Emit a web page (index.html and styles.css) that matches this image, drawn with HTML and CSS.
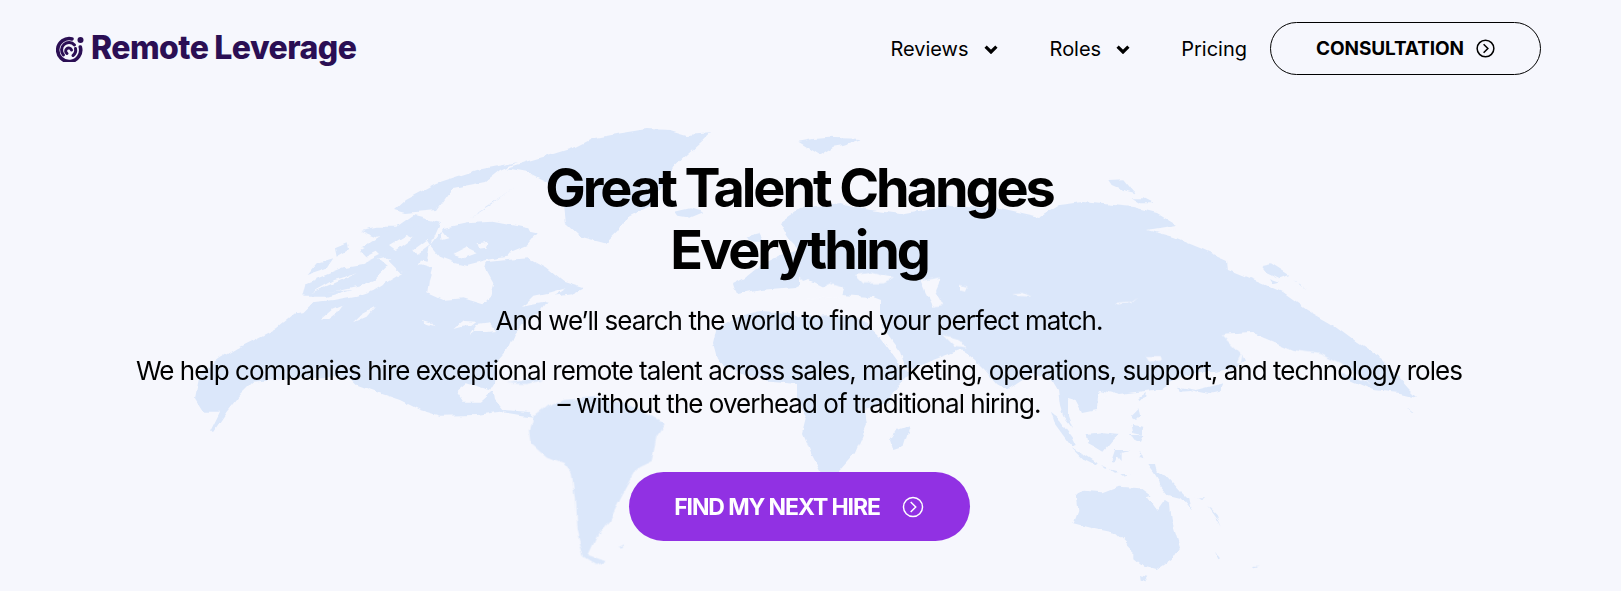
FILE: index.html
```html
<!DOCTYPE html>
<html lang="en">
<head>
<meta charset="utf-8">
<title>Remote Leverage</title>
<link rel="stylesheet" href="styles.css">
</head>
<body>
<svg class="map" viewBox="0 0 1621 591" aria-hidden="true">
  <defs>
    <filter id="rough" filterUnits="userSpaceOnUse" x="0" y="0" width="1621" height="591">
      <feTurbulence type="fractalNoise" baseFrequency="0.07" numOctaves="3" seed="4" result="noise"/>
      <feDisplacementMap in="SourceGraphic" in2="noise" scale="6" xChannelSelector="R" yChannelSelector="G"/>
    </filter>
  </defs>
  <g class="land" filter="url(#rough)">
    <!-- North America, drawn in crop coordinates -->
    <g transform="translate(200 225) scale(.3333)">
      <path d="M-15,520 L0,445 L60,400 L110,370 L180,335 L230,310 L285,265 L310,262 L340,232 L400,225 L470,212 L520,195 L560,170 L610,140 L660,118 L700,130 L690,165 L685,205 L730,225 L790,220 L850,238 L870,215 L880,175 L855,130 L860,112 L920,105 L985,100 L1040,130 L1090,170 L1150,190 L1120,205 L1060,212 L1000,225 L965,245 L1040,232 L1020,260 L975,290 L945,330 L925,375 L890,415 L885,470 L870,495 L800,475 L770,500 L790,530 L840,530 L880,495 L885,525 L910,555 L985,560 L1000,575 L960,570 L900,560 L830,570 L720,572 L660,555 L600,525 L540,505 L470,480 L450,460 L300,460 L160,470 L120,510 L80,560 L40,620 L30,620 L60,560 L10,560 L-15,520 Z"/>
      <path d="M320,150 L350,115 L400,100 L380,130 Z"/>
      <path d="M310,215 L320,175 L380,150 L430,130 L490,120 L530,100 L560,125 L520,165 L450,195 L380,215 Z"/>
      <path d="M405,70 L440,55 L445,75 L410,95 Z"/>
      <path d="M480,80 L530,50 L590,40 L620,60 L570,95 L510,110 Z"/>
      <path d="M560,105 L610,85 L660,105 L650,130 L600,145 Z"/>
      <path d="M540,40 L640,-30 L720,-10 L690,60 L680,110 L620,100 L560,100 Z"/>
      <path d="M690,60 L730,10 L800,-5 L880,-10 L985,10 L1000,40 L950,60 L920,95 L860,105 L800,120 L760,110 L720,95 Z"/>
      <path d="M480,15 L530,5 L600,5 L640,-20 L660,0 L600,25 L530,35 Z"/>
    </g>
    <!-- Arctic islands and Greenland -->
    <path d="M518,162 L477,170 L437,183 L405,200 L394,210 L405,213 L437,210 L453,188 L485,182 L500,170 Z"/>
    <path d="M470,218 L500,198 L516,186 L490,206 Z"/>
    <path d="M362,248 L385,233 L413,230 L405,245 L375,253 Z"/>
    <g transform="translate(470 125) scale(.3333)">
      <path d="M720,25 L650,30 L600,15 L530,12 L450,25 L370,40 L320,65 L240,90 L170,110 L110,130 L170,140 L230,170 L280,250 L285,295 L330,335 L405,355 L440,320 L470,275 L540,240 L580,180 L610,130 L640,100 L700,45 Z"/>
      <path d="M615,260 L660,250 L700,262 L660,278 L625,272 Z"/>
      <path d="M985,50 L1030,42 L1075,38 L1120,40 L1175,42 L1120,60 L1090,65 L1050,90 L1010,65 Z"/>
      <path d="M830,335 L870,325 L885,350 L840,350 Z"/>
      <path d="M0,300 L60,298 L130,310 L200,325 L170,360 L120,380 L60,370 L20,340 Z"/>
    </g>
    <!-- South America -->
    <g transform="translate(520 300) scale(.3333)">
      <path d="M30,395 L40,350 L80,320 L130,300 L240,290 L340,320 L435,370 L410,410 L395,480 L355,500 L305,590 L270,660 L235,700 L205,765 L260,785 L230,795 L190,770 L170,690 L165,600 L155,520 L130,490 L80,470 L35,430 Z"/>
      <path d="M295,745 L315,735 L310,745 Z"/>
      <path d="M-40,250 L40,235 L70,240 L20,252 Z"/>
    </g>
    <!-- Africa -->
    <path d="M713,343 L716,330 L735,318 L760,311 L790,313 L800,317 L833,315 L860,318 L880,337 L897,360 L900,368 L913,372 L908,377 L897,387 L888,403 L865,410 L867,425 L855,453 L840,470 L833,477 L820,470 L813,457 L803,433 L807,417 L797,400 L797,383 L760,380 L727,367 L717,358 Z"/>
    <g transform="translate(800 240) scale(.3333)">
      <path d="M330,555 L310,620 L280,630 L270,600 L290,570 Z"/>
    </g>
    <!-- Eurasia -->
    <path d="M733,283 L745,277 L760,265 L780,255 L800,250 L790,240 L785,232 L780,222 L800,208 L840,203 L870,210 L900,214 L950,205 L1000,208 L1040,217 L1060,205 L1083,202 L1133,207 L1157,213 L1177,225 L1147,230 L1173,237 L1200,248 L1227,260 L1228,270 L1260,283 L1283,293 L1307,310 L1330,323 L1357,343 L1383,360 L1407,387 L1417,397 L1400,393 L1373,390 L1345,378 L1323,358 L1293,350 L1253,333 L1223,335 L1238,345 L1245,360 L1235,368 L1215,372 L1195,372 L1170,383 L1160,390 L1120,395 L1100,390 L1098,396 L1097,410 L1082,413 L1075,400 L1068,398 L1068,415 L1073,428 L1063,415 L1060,405 L1058,390 L1052,380 L1033,373 L1015,385 L1007,390 L997,384 L985,370 L975,360 L965,352 L960,350 L933,360 L913,368 L906,368 L900,352 L885,332 L880,316 L880,300 L872,297 L840,295 L830,290 L810,280 L795,287 L760,290 L737,295 Z"/>
    <!-- Asia-Pacific and Australia -->
    <g transform="translate(1040 150) scale(.3333)">
      <path d="M205,90 L250,88 L285,130 L255,122 L215,105 Z"/>
      <path d="M275,145 L310,145 L340,160 L300,160 Z"/>
      <path d="M665,345 L690,340 L745,375 L720,385 L680,365 Z"/>
      <path d="M760,390 L805,418 L780,405 Z"/>
      <path d="M690,385 L720,395 L700,400 Z"/>
    </g>
    <g transform="translate(1040 370) scale(.3333)">
      <path d="M415,50 L470,60 L530,45 L550,40 L540,65 L510,72 L450,60 L418,62 Z"/>
      <path d="M295,85 L315,72 L312,85 L298,90 Z"/>
      <path d="M30,125 L60,150 L100,205 L110,225 L95,230 L65,190 L40,155 Z"/>
      <path d="M140,195 L185,190 L235,195 L215,215 L190,245 L165,230 L145,220 Z"/>
      <path d="M95,235 L125,250 L170,280 L165,285 L125,265 Z"/>
      <path d="M180,285 L205,295 L195,296 Z"/>
      <path d="M210,298 L240,305 L225,308 Z"/>
      <path d="M238,315 L270,316 L245,320 Z"/>
      <path d="M215,270 L225,240 L275,240 L245,245 L245,270 L232,255 L225,272 Z"/>
      <path d="M270,140 L295,115 L300,135 L285,150 Z"/>
      <path d="M275,165 L310,170 L305,195 L280,190 Z"/>
      <path d="M270,195 L310,195 L300,215 L285,215 Z"/>
      <path d="M298,262 L305,250 L310,265 Z"/>
      <path d="M322,285 L345,285 L350,305 L380,315 L420,360 L445,385 L452,418 L425,385 L385,375 L365,350 L340,310 Z"/>
      <path d="M110,375 L135,365 L190,370 L240,350 L300,355 L335,380 L320,385 L350,425 L375,390 L390,400 L395,450 L420,530 L395,570 L350,600 L310,590 L280,565 L280,540 L260,520 L230,490 L170,478 L100,460 L115,420 Z"/>
      <path d="M300,615 L325,620 L315,635 L302,632 Z"/>
      <path d="M525,545 L540,565 L535,568 Z"/>
      <path d="M635,590 L660,590 L640,595 Z"/>
      <path d="M455,380 L490,390 L495,385 L470,385 Z"/>
      <path d="M505,410 L530,435 L545,470 L530,445 Z"/>
      <path d="M1100,110 L1125,130 L1115,125 Z"/>
    </g>
  </g>
  <!-- Inland water and bays, cut out of the land -->
  <g class="sea" filter="url(#rough)">
    <g transform="translate(200 225) scale(.3333)">
      <path d="M360,285 L395,255 L425,242 L405,270 L385,285 Z"/>
      <path d="M462,292 L490,265 L525,245 L500,275 Z"/>
      <path d="M668,282 L690,288 L703,303 L680,296 Z"/>
      <path d="M760,312 L790,288 L830,290 L815,302 L785,305 Z"/>
      <path d="M810,330 L830,300 L870,295 L885,315 L860,318 L825,318 Z"/>
      <path d="M970,245 L1000,215 L1050,205 L1100,190 L1060,215 Z"/>
      <path d="M720,10 L745,40 L725,45 Z"/>
      <path d="M830,55 L865,50 L860,65 L835,68 Z"/>
      <path d="M760,90 L800,70 L830,85 L790,100 Z"/>
      <path d="M330,205 L400,175 L470,145 L400,165 Z"/>
      <path d="M380,200 L420,195 L530,170 L520,188 L460,192 Z"/>
      <path d="M470,110 L530,80 L540,90 L490,115 Z"/>
      <path d="M570,60 L620,30 L640,40 L590,75 Z"/>
      <path d="M640,75 L680,45 L690,60 L650,90 Z"/>
    </g>
    <g transform="translate(800 240) scale(.3333)">
      <path d="M165,105 L215,98 L285,115 L250,130 L190,130 Z"/>
      <path d="M365,125 L420,115 L405,150 L430,195 L400,200 L380,160 Z"/>
      <path d="M480,135 L500,140 L495,152 L480,148 Z"/>
      <path d="M640,160 L665,158 L692,170 L660,168 Z"/>
      <path d="M945,192 L990,188 L1012,172 L990,192 L955,196 Z"/>
      <path d="M0,110 L50,150 L90,130 L130,145 L120,180 L60,170 L0,190 Z"/>
      <path d="M430,285 L480,300 L500,325 L465,320 Z"/>
    </g>
    <g transform="translate(1040 150) scale(.3333)">
      <path d="M320,238 L400,240 L410,235 L370,245 Z"/>
      <path d="M320,618 L365,618 L370,632 L330,635 Z"/>
      <path d="M180,725 L205,730 L195,745 L175,740 Z"/>
      <path d="M545,555 L640,550 L760,600 L840,612 L900,640 L1000,705 L940,680 L850,650 L760,640 L660,640 L600,610 Z"/>
      <path d="M590,640 L612,595 L602,640 Z"/>
    </g>
  </g>
</svg>

<header class="site-header">
  <a class="logo" href="#">
    <svg class="logo-mark" viewBox="0 0 29 27" aria-hidden="true">
      <path class="logo-ring" d="M16 3.9 A11.5 11.5 0 1 0 24.3 12"/>
      <path class="logo-arc" d="M7.5 20 A7.2 7.2 0 0 1 18.5 10"/>
      <path class="logo-arc" d="M11 18.5 A3 3 0 1 1 15.5 15"/>
      <path class="logo-arc" d="M19.5 13.5 A7 7 0 0 1 17 20.5"/>
      <circle class="logo-dot" cx="24.5" cy="5" r="3"/>
    </svg>
    <span class="logo-text">Remote Leverage</span>
  </a>
  <nav class="nav">
    <a class="nav-link" href="#">Reviews
      <svg class="caret" viewBox="0 0 14 9" aria-hidden="true"><path d="M1.6 1.6 L7 7 L12.4 1.6"/></svg>
    </a>
    <a class="nav-link" href="#">Roles
      <svg class="caret" viewBox="0 0 14 9" aria-hidden="true"><path d="M1.6 1.6 L7 7 L12.4 1.6"/></svg>
    </a>
    <a class="nav-link" href="#">Pricing</a>
    <a class="consult" href="#">CONSULTATION
      <svg class="circle-arrow" viewBox="0 0 20 20" aria-hidden="true"><circle cx="10" cy="10" r="8.8"/><path d="M8 5.5 L12.5 10 L8 14.5"/></svg>
    </a>
  </nav>
</header>

<main class="hero">
  <h1 class="hero-title">Great Talent Changes<br>Everything</h1>
  <p class="hero-lead">And we’ll search the world to find your perfect match.</p>
  <p class="hero-body">We help companies hire exceptional remote talent across sales, marketing, operations, support, and technology roles – without the overhead of traditional hiring.</p>
  <a class="cta" href="#">FIND MY NEXT HIRE
    <svg class="circle-arrow cta-arrow" viewBox="0 0 24 24" aria-hidden="true"><circle cx="12" cy="12" r="10.4"/><path d="M9.5 6.5 L15 12 L9.5 17.5"/></svg>
  </a>
</main>
</body>
</html>
```

FILE: styles.css
```css
* { box-sizing: border-box; }

html, body { margin: 0; padding: 0; }

body {
  position: relative;
  width: 1621px;
  height: 591px;
  overflow: hidden;
  background: #f6f7fd;
  color: #000;
  font-family: Inter, "Liberation Sans", sans-serif;
}

a { color: inherit; text-decoration: none; }

.map {
  position: absolute;
  inset: 0;
  width: 1621px;
  height: 591px;
}
.land { fill: #dbe7fa; }
.sea { fill: #f6f7fd; }

.site-header {
  position: relative;
  display: flex;
  align-items: center;
  justify-content: space-between;
  height: 96px;
  padding: 0 80px 0 56px;
}

.logo { display: flex; align-items: center; gap: 6px; color: #2b0f54; }
.logo-mark { width: 29px; height: 27px; }
.logo-ring, .logo-arc { fill: none; stroke: #2b0f54; stroke-linecap: round; }
.logo-ring { stroke-width: 3.6; }
.logo-arc { stroke-width: 3; }
.logo-dot { fill: #2b0f54; }
.logo-text {
  font-size: 32px;
  font-weight: 800;
  letter-spacing: -0.55px;
  word-spacing: -0.5px;
  line-height: 1;
}

.nav { display: flex; align-items: center; }
.nav-link {
  display: flex;
  align-items: center;
  gap: 15px;
  margin-right: 52px;
  padding-top: 2px;
  font-size: 20px;
  line-height: 28px;
}
.nav-link:nth-child(2) { margin-right: 51px; }
.nav-link:nth-child(3) { margin-right: 23px; }
.caret { width: 14px; height: 9px; fill: none; stroke: #000; stroke-width: 3.2; }

.consult {
  display: flex;
  align-items: center;
  justify-content: center;
  gap: 12px;
  width: 271px;
  height: 53px;
  border: 1px solid #000;
  border-radius: 27px;
  font-size: 19px;
  font-weight: 700;
  letter-spacing: -0.1px;
}
.circle-arrow { width: 19px; height: 19px; fill: none; stroke: currentColor; stroke-width: 1.6; }

.hero {
  position: relative;
  display: flex;
  flex-direction: column;
  align-items: center;
  width: 1598px;
  padding-top: 61px;
  text-align: center;
}
.hero-title {
  margin: 0;
  font-size: 54px;
  font-weight: 700;
  line-height: 62px;
  letter-spacing: -3.1px;
}
.hero-lead {
  margin: 23px 0 0;
  font-size: 26px;
  line-height: 33px;
  letter-spacing: -0.96px;
}
.hero-body {
  width: 1332px;
  margin: 17px 0 0;
  font-size: 26px;
  line-height: 33px;
  letter-spacing: -0.97px;
}
.cta {
  display: flex;
  align-items: center;
  justify-content: center;
  gap: 22px;
  width: 341px;
  height: 69px;
  margin-top: 52px;
  border-radius: 35px;
  background: #9131e3;
  color: #fff;
  font-size: 23px;
  font-weight: 700;
  letter-spacing: -1.1px;
}
.cta-arrow { width: 22px; height: 22px; }
```
